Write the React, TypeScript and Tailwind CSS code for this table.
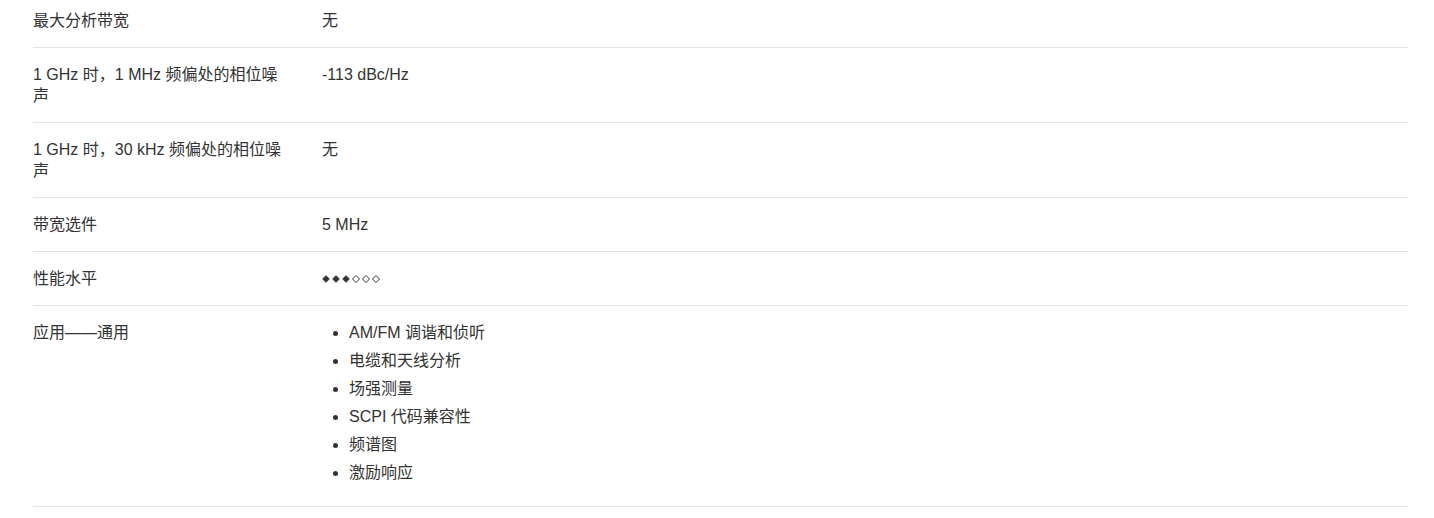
const rows: { label: string; value: React.ReactNode; first?: boolean }[] = [];

function Diamonds({ filled, total }: { filled: number; total: number }) {
  return (
    <span className="flex items-center gap-[2px] h-[21px]">
      {Array.from({ length: total }).map((_, i) => (
        <svg key={i} width="8" height="8" viewBox="0 0 8 8">
          <path
            d="M4 0.5 L7.5 4 L4 7.5 L0.5 4 Z"
            fill={i < filled ? '#333333' : 'none'}
            stroke="#333333"
            strokeWidth={i < filled ? 0.5 : 1}
          />
        </svg>
      ))}
    </span>
  );
}

const apps = ['AM/FM 调谐和侦听', '电缆和天线分析', '场强测量', 'SCPI 代码兼容性', '频谱图', '激励响应'];

rows.push(
  { label: '最大分析带宽', value: '无', first: true },
  { label: '1 GHz 时，1 MHz 频偏处的相位噪声', value: '-113 dBc/Hz' },
  { label: '1 GHz 时，30 kHz 频偏处的相位噪声', value: '无' },
  { label: '带宽选件', value: '5 MHz' },
  { label: '性能水平', value: <Diamonds filled={3} total={6} /> },
  {
    label: '应用——通用',
    value: (
      <ul className="list-disc pl-[27px]">
        {apps.map((a) => (
          <li key={a} className="mb-[7px] leading-[21px]">
            {a}
          </li>
        ))}
      </ul>
    ),
  },
);

export default function App() {
  return (
    <div
      className="min-h-screen bg-white pl-[33px] pr-[26px] text-[16px] leading-[21px] text-[#333333]"
      style={{ fontFamily: '"Liberation Sans", "Noto Sans CJK SC", sans-serif' }}
    >
      {rows.map((r) => (
        <div
          key={r.label}
          className={`grid grid-cols-[289px_1fr] border-b border-[#e5e5e5] ${r.first ? 'pt-[10px] pb-4' : 'py-4'}`}
        >
          <div className="pr-[36px]">{r.label}</div>
          <div>{r.value}</div>
        </div>
      ))}
    </div>
  );
}
